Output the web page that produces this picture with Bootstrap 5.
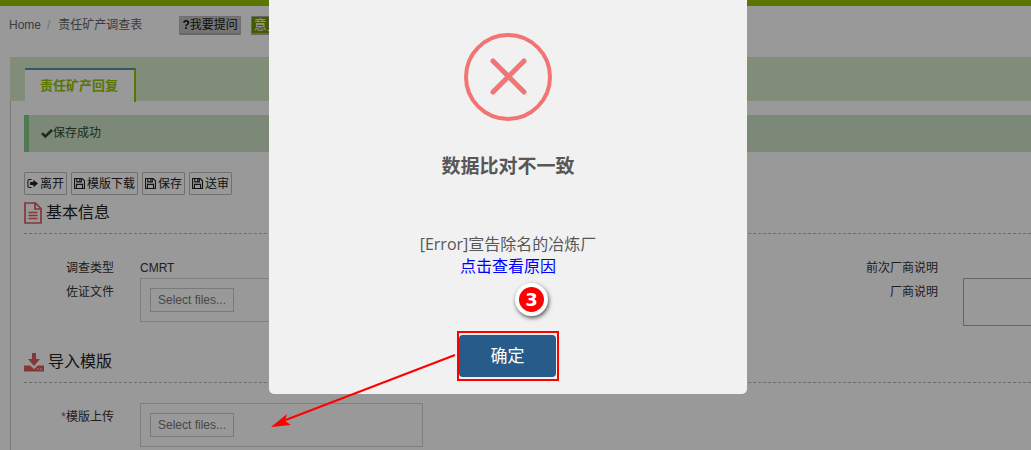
<!DOCTYPE html>
<html lang="zh-CN">
<head>
<meta charset="utf-8">
<meta name="viewport" content="width=device-width, initial-scale=1">
<title>责任矿产调查表</title>
<link href="https://cdn.jsdelivr.net/npm/bootstrap@5.3.0/dist/css/bootstrap.min.css" rel="stylesheet">
<style>
body{font-family:"Liberation Sans","Noto Sans CJK SC",sans-serif;font-size:12px;line-height:18px;color:#333;overflow:hidden;height:100vh}
.topline{height:6px;background:#96c300}
.crumbs{padding:10px 9px 22px}
.crumbs .breadcrumb{--bs-breadcrumb-divider-color:#bbb;line-height:18px}
.crumbs .breadcrumb,.crumbs .breadcrumb a{color:#666;text-decoration:none}
.breadcrumb-item+.breadcrumb-item{padding-left:6px}
.breadcrumb-item+.breadcrumb-item::before{padding-right:8px}
.tag-btns{gap:10px;margin-left:37px}
.tag-btn{border:1px solid #bbb;border-bottom:2px solid #aaa;background:#c4c4c4;color:#111;height:19px;line-height:16px;padding:0 2px;border-radius:1px}
.tag-btn.olive{background:#719600;border-color:#aaa;color:#fff;font-size:13px}
.tabs-band{height:44px;background:#d5ebc8;padding:11px 0 0 15px;margin-left:10px}
.tab-on{height:34px;line-height:32px;padding:0 16px 0 15px;background:#fff;border:0;border-top:2px solid #5b90b0;border-right:2px solid #96c300;color:#96c300;font-weight:700;font-size:13px}
.pane{margin-left:10px;border-left:1px solid #ccc;padding:14px 0 0 13px;min-height:calc(100vh - 101px)}
.saved{line-height:37px;border:0;border-left:5px solid #86c98b;border-radius:0;background:#cfe3c8;color:#2c4c2c;padding:0 12px;margin:0 0 20px}
.saved svg{width:12px;height:12px;vertical-align:-2px}
.tools{gap:4px;margin-bottom:6px}
.tool{height:23px;line-height:20px;border:1px solid #bbb;background:#fff;color:#222;padding:0 2px;border-radius:1px;white-space:nowrap}
.tool svg{width:11px;height:11px;vertical-align:-1px;margin-right:2px}
.section-title{font-size:16px;line-height:24px;font-weight:400;color:#222;gap:4px;padding-bottom:8px;border-bottom:1px dashed #b4b4b4}
.section-title svg{display:block}
.basics{padding-top:25px}
.basics-grid{row-gap:1px}
.fields{gap:26px}
.field-label{width:90px;text-align:right}
.low-label{padding-top:5px}
.right-fields{gap:25px;margin-left:auto}
.right-fields .note-cell{padding-top:19px}
.upload-row{margin-top:20px}
.upload{width:283px;height:44px;border:1px solid #d4d4d4;padding:9px}
.pick{border:1px solid #ccc;background:#fff;color:#777;height:24px;line-height:20px;padding:0 7px}
.note{display:block;width:68px;height:48px;border:1px solid #aaa;border-right:0;resize:none;background:#fff}
.shade{background:rgba(0,0,0,.4);padding-right:15px}
.alert-box{width:478px;background:#f1f1f1;border-radius:0 0 5px 5px;font-family:"Open Sans","Noto Sans CJK SC",sans-serif;color:#575757;padding:33px 0 13px}
.alert-box h2{font-size:19px;line-height:28px;font-weight:700;margin:31px 0 0}
.alert-box p{font-size:16px;line-height:22px;margin:53px 0 0}
.alert-box p a{color:#00f;text-decoration:none}
.ring{border:2px solid #f00;padding:2px 1px 2px 0;margin-top:54px}
.ok-btn{display:block;width:97px;height:42px;background:#275b8a;border:0;border-radius:4px;color:#fff;font-size:17px;line-height:24px}
.step{left:246px;top:283px;width:33px;height:33px;border:4px solid #fff;border-radius:50%;background:#f00;color:#fff;font:700 18px/25px "DejaVu Sans",sans-serif;text-align:center;box-shadow:1px 2px 4px #555}
.arrow{left:0;top:350px;overflow:visible;pointer-events:none}
</style>
</head>
<body>
<svg class="d-none">
  <symbol id="disk" viewBox="0 0 12 12"><path d="M.6.6H9l2.400 2.400v8.400H.6zM3 .6v3.600h5V.6M2.700 11.200V7h6.600v4.200M6.300 1.200v2.400" fill="none" stroke="currentColor" stroke-width="1.2"/></symbol>
</svg>
<header>
  <div class="topline"></div>
  <div class="crumbs d-flex align-items-start">
    <nav aria-label="breadcrumb"><ol class="breadcrumb mb-0"><li class="breadcrumb-item"><a href="#">Home</a></li><li class="breadcrumb-item">责任矿产调查表</li></ol></nav>
    <div class="tag-btns d-flex">
      <button class="tag-btn" type="button"><b>?</b>我要提问</button>
      <button class="tag-btn olive" type="button">意见</button>
    </div>
  </div>
</header>
<main>
  <div class="tabs-band"><button class="tab-on" type="button">责任矿产回复</button></div>
  <div class="pane">
    <div class="alert saved" role="status"><svg viewBox="0 0 12 12"><path d="M1 6.200l3.300 3.300L11 3" fill="none" stroke="currentColor" stroke-width="2.6"/></svg>保存成功</div>
    <div class="tools d-flex">
      <button class="tool" type="button"><svg viewBox="0 0 12 12"><path d="M5 1.700H2.400Q1 1.700 1 3.100v5.800q0 1.400 1.400 1.400H5" fill="none" stroke="currentColor" stroke-width="1.1"/><path d="M3.400 4.400H7V2l5 4-5 4V7.600H3.400z" fill="currentColor"/></svg>离开</button>
      <button class="tool" type="button"><svg><use href="#disk"/></svg>模版下载</button>
      <button class="tool" type="button"><svg><use href="#disk"/></svg>保存</button>
      <button class="tool" type="button"><svg><use href="#disk"/></svg>送审</button>
    </div>
    <h3 class="section-title d-flex align-items-center mb-0"><svg width="18" height="22" viewBox="0 0 18 22"><path d="M1 1h10.500L17 6.500V21H1zM11 1v6h6M4.500 10.500h9M4.500 13.500h9M4.500 16.500h9" fill="none" stroke="#dc5a60" stroke-width="1.700"/></svg>基本信息</h3>
    <div class="basics d-flex">
      <div class="basics-grid d-grid align-content-start">
        <div class="d-flex fields"><span class="field-label">调查类型</span><span>CMRT</span></div>
        <div class="d-flex fields"><label class="field-label low-label" for="proof">佐证文件</label><div class="upload"><button class="pick" id="proof" type="button">Select files...</button></div></div>
      </div>
      <div class="right-fields d-flex">
        <div class="basics-grid d-grid align-content-start"><div>前次厂商说明</div><label class="low-label text-end" for="note">厂商说明</label></div>
        <div class="note-cell"><textarea class="note" id="note"></textarea></div>
      </div>
    </div>
    <h3 class="section-title d-flex align-items-center mb-0 mt-4"><svg width="20" height="19" viewBox="0 0 20 19"><path d="M8 0h4v6h4l-6 7-6-7h4z" fill="#dc5a60"/><path d="M0 12.500h6l4 3.500 4-3.500h6V18.500H0z" fill="#dc5a60"/><path d="M13 16h1.500M16 16h1.500" stroke="#fff" stroke-width="1.200"/></svg>导入模版</h3>
    <div class="upload-row d-flex fields"><label class="field-label low-label" for="template"><span class="text-danger">*</span>模版上传</label><div class="upload"><button class="pick" id="template" type="button">Select files...</button></div></div>
  </div>
</main>

<div class="shade position-fixed top-0 start-0 w-100 h-100 d-flex justify-content-center align-items-start">
  <div class="alert-box position-relative d-flex flex-column align-items-center text-center" role="dialog" aria-modal="true" aria-labelledby="dialog-title">
    <svg width="88" height="88" viewBox="0 0 88 88" fill="none" stroke="#f27474"><circle cx="44" cy="44" r="42" stroke-width="4"/><path d="M29 28l31 31M60 28L29 59" stroke-width="5" stroke-linecap="round"/></svg>
    <h2 id="dialog-title">数据比对不一致</h2>
    <p>[Error]宣告除名的冶炼厂<br><a href="#">点击查看原因</a></p>
    <div class="ring"><button class="ok-btn" type="button">确定</button></div>
    <span class="step position-absolute">3</span>
    <svg class="arrow position-absolute" width="190" height="80"><path d="M186 5L14 71" stroke="#f00" stroke-width="2"/><path d="M2 77L18 64l-2 7 6 4z" fill="#f00"/></svg>
  </div>
</div>
<script src="https://cdn.jsdelivr.net/npm/bootstrap@5.3.0/dist/js/bootstrap.bundle.min.js"></script>
</body>
</html>
